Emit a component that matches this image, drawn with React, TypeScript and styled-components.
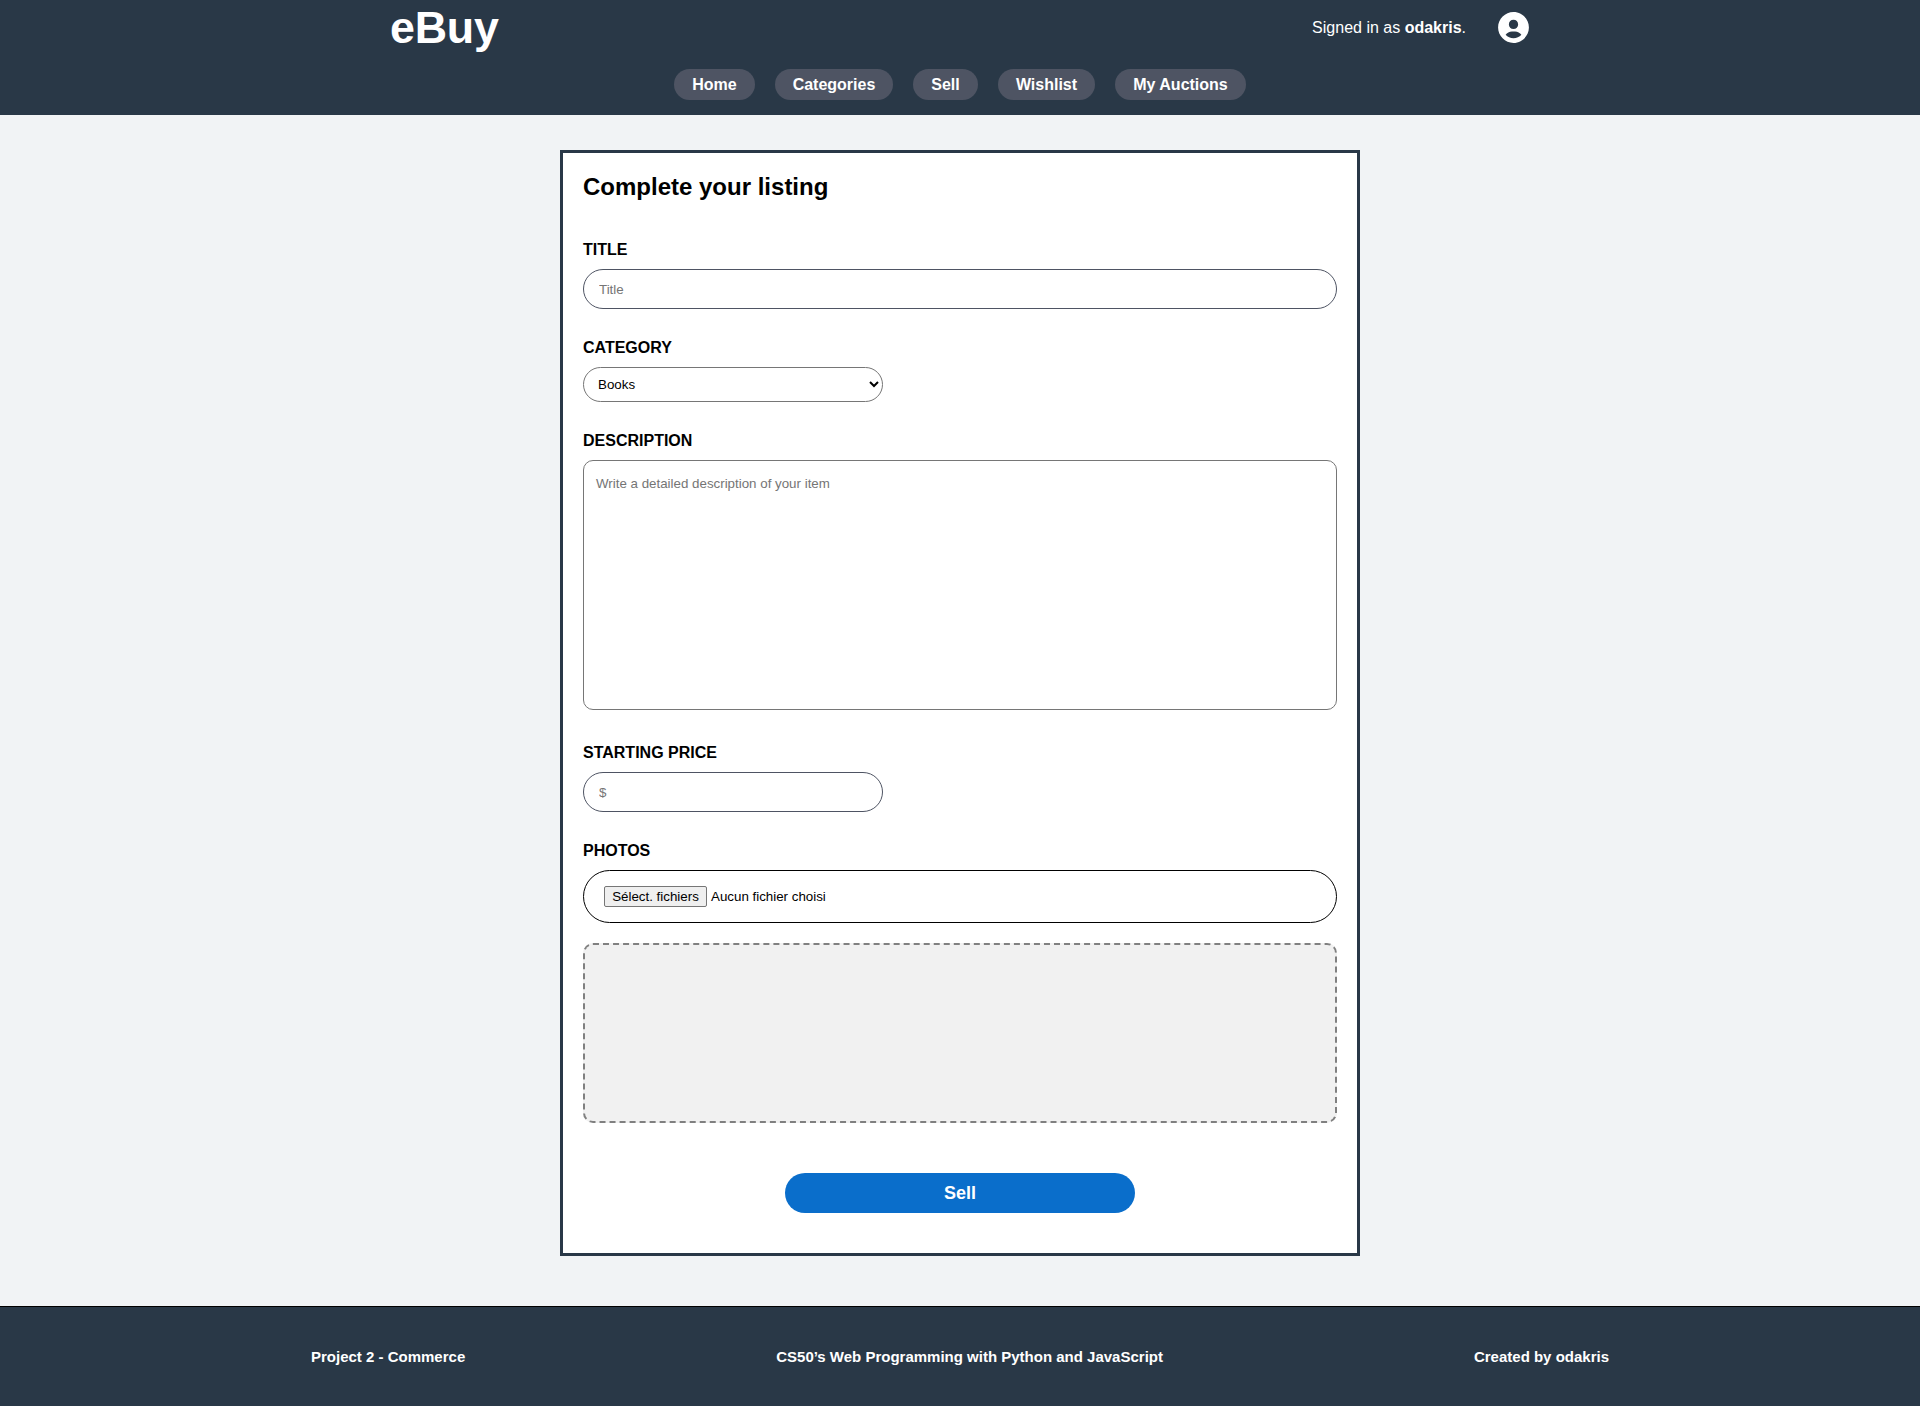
import React from "react";
import styled, { createGlobalStyle } from "styled-components";
import { BiSolidUserCircle } from "react-icons/bi";

const GlobalStyle = createGlobalStyle`
  *, *::before, *::after { box-sizing: border-box; }
  body {
    margin: 0;
    background: #f1f3f5;
    color: #000;
    font-family: "Liberation Sans", Arial, sans-serif;
    font-size: 16px;
  }
`;

const Page = styled.div`
  min-height: 1406px;
  display: flex;
  flex-direction: column;
`;

const Header = styled.header`
  height: 115px;
  background: #293847;
  color: #fff;
`;

const TopBar = styled.div`
  width: 1140px;
  height: 55px;
  margin: 0 auto;
  display: flex;
  align-items: center;
  justify-content: space-between;
`;

const Logo = styled.h1`
  margin: 0;
  font-size: 44.8px;
  line-height: 55px;
  letter-spacing: -0.2px;
`;

const Account = styled.div`
  display: flex;
  align-items: center;
  gap: 28.5px;
  line-height: 18px;

  svg { display: block; margin-right: -1.5px; }
`;

const Nav = styled.nav`
  display: flex;
  justify-content: center;
  gap: 20px;
  padding-top: 14px;
`;

const NavLink = styled.a<{ $width: number }>`
  width: ${(p) => p.$width}px;
  height: 31px;
  border-radius: 15.5px;
  background: #4e5463;
  font-weight: bold;
  line-height: 31px;
  text-align: center;
  white-space: nowrap;
`;

const Main = styled.main`
  padding: 35px 0 50px;
`;

const Card = styled.form`
  width: 800px;
  height: 1106px;
  margin: 0 auto;
  padding: 20px;
  display: flex;
  flex-direction: column;
  background: #fff;
  border: 3px solid #293847;
`;

const Heading = styled.h2`
  margin: 0 0 40px;
  font-size: 24px;
  line-height: 28px;
`;

const Field = styled.div<{ $gap?: number }>`
  display: flex;
  flex-direction: column;
  align-items: flex-start;
  margin-bottom: ${(p) => p.$gap ?? 30}px;
`;

const Label = styled.label`
  margin-bottom: 10px;
  font-weight: bold;
  line-height: 18px;
`;

const Input = styled.input<{ $width: string }>`
  width: ${(p) => p.$width};
  height: 40px;
  padding: 0 15px;
  border: 1px solid #4e5463;
  border-radius: 20px;
  background: #fff;
  font: 13.333px "Liberation Sans", Arial, sans-serif;

  &::placeholder { color: #757575; }
`;

const Select = styled.select`
  width: 300px;
  height: 35px;
  padding: 0 0 0 10px;
  border: 1px solid #767676;
  border-radius: 17.5px;
  background: #fff;
  color: #000;
  font: 13.333px "Liberation Sans", Arial, sans-serif;
`;

const TextArea = styled.textarea`
  display: block;
  width: 100%;
  height: 250px;
  padding: 15px 12px;
  border: 1px solid #767676;
  border-radius: 10px;
  resize: none;
  font: 13.333px "Liberation Sans", Arial, sans-serif;

  &::placeholder { color: #757575; }
`;

const FilePicker = styled.div`
  width: 100%;
  height: 53px;
  padding: 0 20px;
  display: flex;
  align-items: center;
  gap: 4px;
  border: 1px solid #000;
  border-radius: 26.5px;
  font-size: 13.333px;
`;

const FileButton = styled.button`
  width: 103px;
  height: 21px;
  padding: 0;
  border: 1px solid #767676;
  border-radius: 2px;
  background: #efefef;
  color: #000;
  font: 13.333px "Liberation Sans", Arial, sans-serif;
`;

const Preview = styled.div`
  flex: none;
  height: 180px;
  border: 2px dashed #808080;
  border-radius: 10px;
  background: #f1f1f1;
`;

const Submit = styled.button`
  align-self: center;
  width: 350px;
  height: 40px;
  margin-top: 50px;
  padding: 0;
  border: 0;
  border-radius: 20px;
  background: #0a6ecb;
  color: #fff;
  font: bold 18px "Liberation Sans", Arial, sans-serif;
`;

const Footer = styled.footer`
  height: 100px;
  border-top: 1px solid #000;
  background: #293847;
  color: #fff;
`;

const FooterRow = styled.div`
  width: 1298px;
  height: 99px;
  margin: 0 auto;
  display: flex;
  align-items: center;
  justify-content: space-between;
  font-size: 15px;
  font-weight: bold;
`;

const links = [
  { label: "Home", width: 81 },
  { label: "Categories", width: 118 },
  { label: "Sell", width: 65 },
  { label: "Wishlist", width: 97 },
  { label: "My Auctions", width: 131 },
];

export default function App() {
  return (
    <Page>
      <GlobalStyle />
      <Header>
        <TopBar>
          <Logo>eBuy</Logo>
          <Account>
            <span>
              Signed in as <strong>odakris</strong>.
            </span>
            <BiSolidUserCircle size={37} />
          </Account>
        </TopBar>
        <Nav>
          {links.map((l) => (
            <NavLink key={l.label} $width={l.width}>
              {l.label}
            </NavLink>
          ))}
        </Nav>
      </Header>
      <Main>
        <Card>
          <Heading>Complete your listing</Heading>
          <Field>
            <Label>TITLE</Label>
            <Input $width="100%" placeholder="Title" />
          </Field>
          <Field>
            <Label>CATEGORY</Label>
            <Select defaultValue="Books">
              <option>Books</option>
            </Select>
          </Field>
          <Field $gap={34}>
            <Label>DESCRIPTION</Label>
            <TextArea placeholder="Write a detailed description of your item" />
          </Field>
          <Field>
            <Label>STARTING PRICE</Label>
            <Input $width="300px" placeholder="$" />
          </Field>
          <Field $gap={20}>
            <Label>PHOTOS</Label>
            <FilePicker>
              <FileButton type="button">Sélect. fichiers</FileButton>
              <span>Aucun fichier choisi</span>
            </FilePicker>
          </Field>
          <Preview />
          <Submit type="button">Sell</Submit>
        </Card>
      </Main>
      <Footer>
        <FooterRow>
          <span>Project 2 - Commerce</span>
          <span>CS50’s Web Programming with Python and JavaScript</span>
          <span>Created by odakris</span>
        </FooterRow>
      </Footer>
    </Page>
  );
}
